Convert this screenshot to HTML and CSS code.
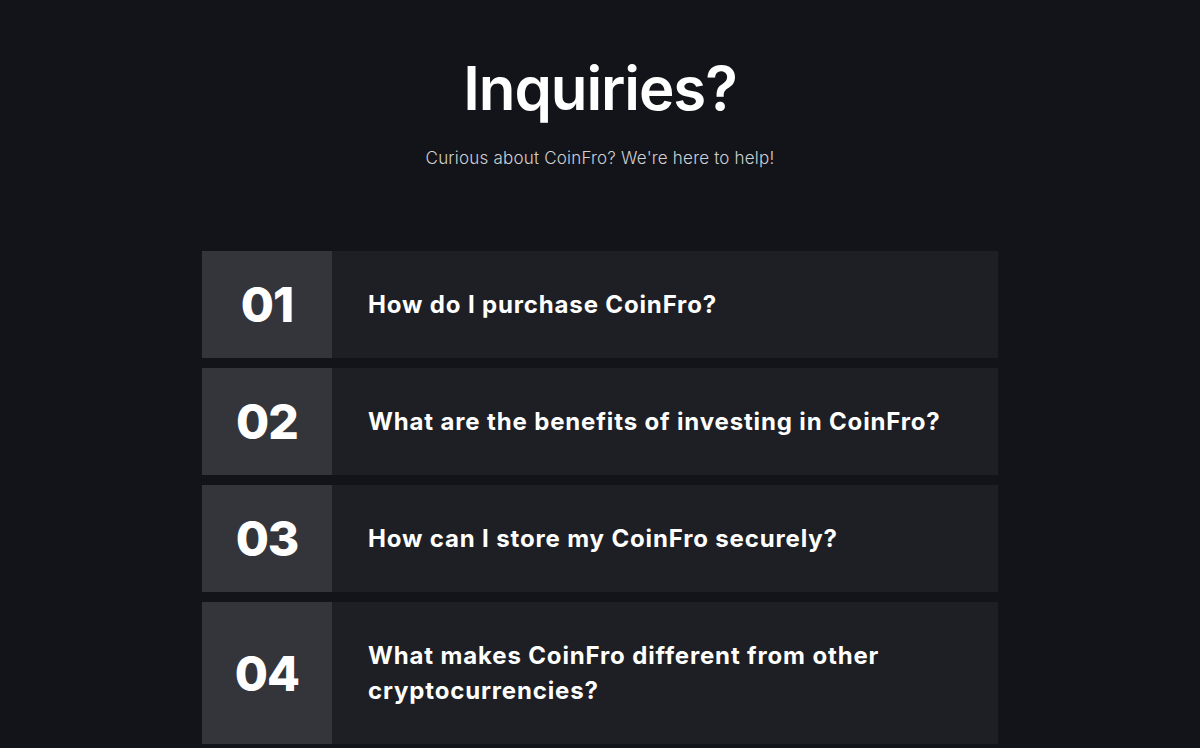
FILE: index.html
```html
<!DOCTYPE html>
<html lang="en">

<head>
  <meta charset="UTF-8" />
  <meta name="viewport" content="width=device-width, initial-scale=1.0" />
  <title>CoinFro - Inquiries</title>

  <link rel="stylesheet" href="styles.css">
</head>

<body>

  <!-- FAQ Section -->
  <section class="faq">
    <div class="faq-heading">
      <h1>Inquiries?</h1>
      <p>Curious about CoinFro? We're here to help!</p>
    </div>

    <div class="faq-list">
      <div class="faq-item">
        <div class="faq-number">01</div>
        <div class="faq-question">How do I purchase CoinFro?</div>
      </div>
      <div class="faq-item">
        <div class="faq-number">02</div>
        <div class="faq-question">What are the benefits of investing in CoinFro?</div>
      </div>
      <div class="faq-item">
        <div class="faq-number">03</div>
        <div class="faq-question">How can I store my CoinFro securely?</div>
      </div>
      <div class="faq-item">
        <div class="faq-number">04</div>
        <div class="faq-question">What makes CoinFro different from other cryptocurrencies?</div>
      </div>
    </div>
  </section>

</body>

</html>
```

FILE: styles.css
```css
/* Page base */
body {
  font-family: "Inter", "Open Sans", sans-serif;
  margin: 0;
  padding: 0;
  color: #fff;
  background-color: #131419;
}

.faq {
  padding: 52px 0 40px;
}

/* Heading block */
.faq-heading {
  text-align: center;
}

.faq-heading h1 {
  font-size: 60px;
  font-weight: 600;
  line-height: 72px;
  margin: 0;
  letter-spacing: -1.1px;
}

.faq-heading p {
  font-size: 17px;
  font-weight: 300;
  color: #cfd0d3;
  margin: 24px 0 0;
  letter-spacing: 0.2px;
}

/* Question list */
.faq-list {
  width: 796px;
  margin: 83px auto 0;
  display: flex;
  flex-direction: column;
  gap: 10px;
}

.faq-item {
  display: flex;
  background-color: #1e1f24;
}

.faq-number {
  flex: 0 0 130px;
  display: flex;
  align-items: center;
  justify-content: center;
  background-color: #34353b;
  font-size: 48px;
  font-weight: 800;
  letter-spacing: -1px;
}

.faq-question {
  padding: 36px 56px 36px 36px;
  font-size: 24px;
  font-weight: 700;
  line-height: 35px;
  letter-spacing: 0.85px;
}
```
